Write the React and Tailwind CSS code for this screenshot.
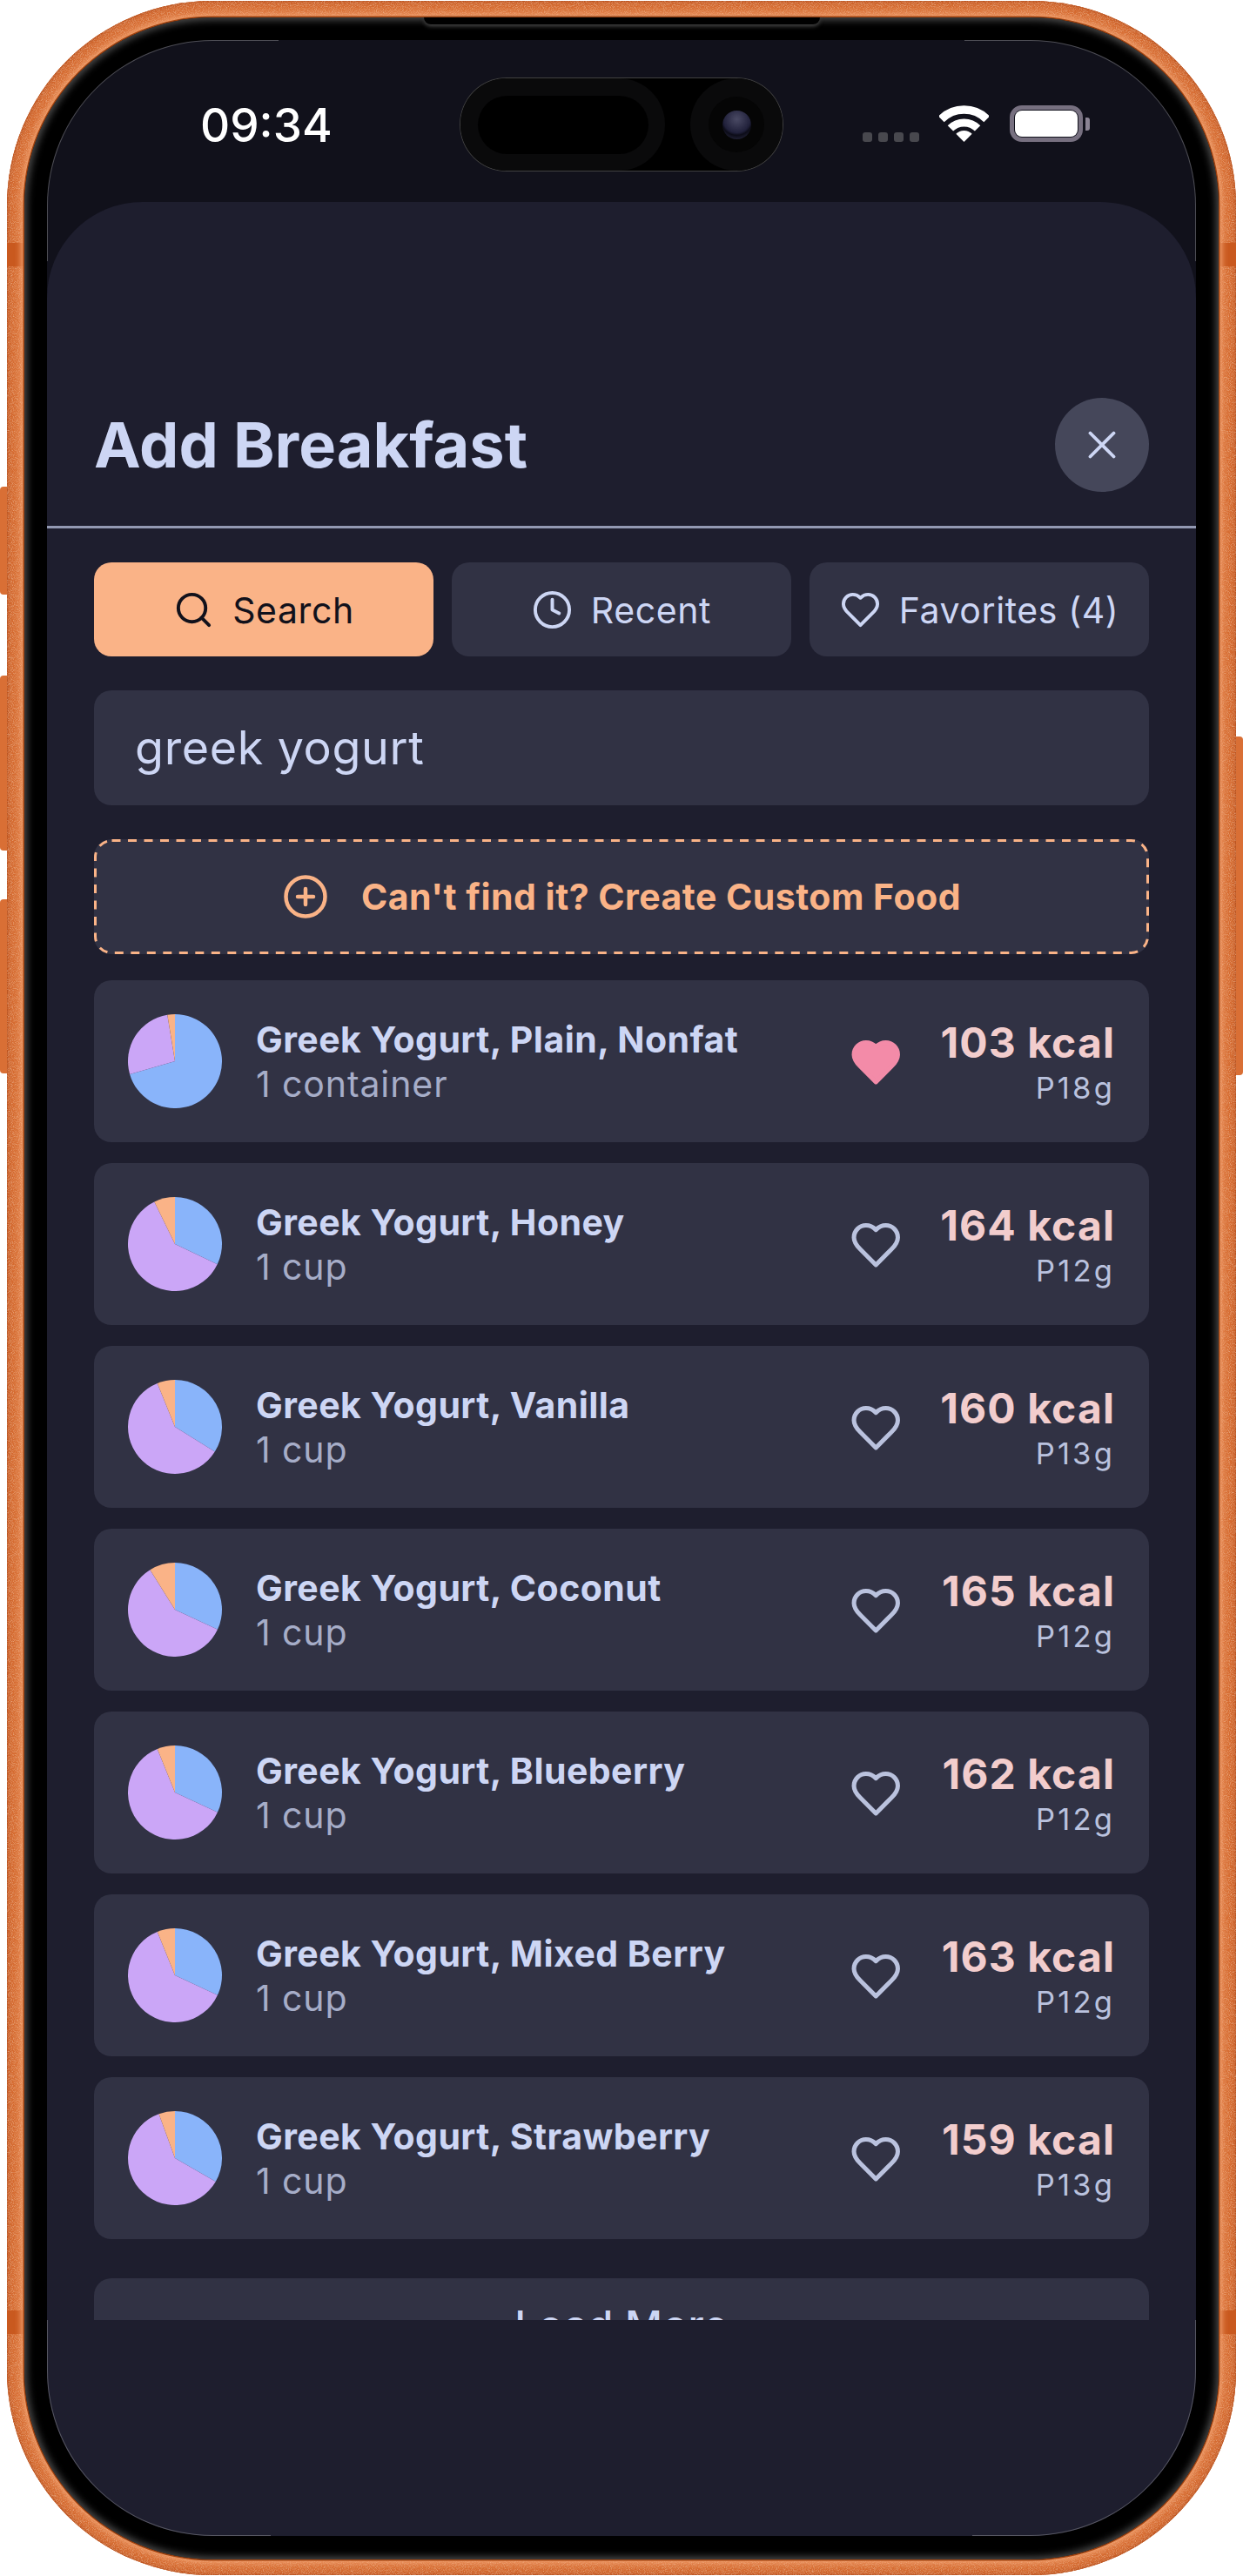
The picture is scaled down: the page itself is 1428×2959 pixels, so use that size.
import React from "react";
import { Search, Clock, X, CirclePlus } from "lucide-react";

const HEART = "M19 14c1.49-1.46 3-3.21 3-5.5A5.5 5.5 0 0 0 16.5 3c-1.76 0-3 .5-4.5 2-1.5-1.5-2.74-2-4.5-2A5.5 5.5 0 0 0 2 8.5c0 2.3 1.5 4.05 3 5.5l7 7Z";

function Heart({ size, filled, className }) {
  return (
    <svg width={size} height={size} viewBox="0 0 24 24" fill={filled ? "#f38ba8" : "none"} stroke={filled ? "#f38ba8" : "currentColor"} strokeWidth="2" strokeLinecap="round" strokeLinejoin="round" className={className}>
      <path d={HEART} />
    </svg>
  );
}

function slice(a0, a1) {
  const r = 54;
  const p = (a) => {
    const t = (a * Math.PI) / 180;
    return `${(54 + r * Math.sin(t)).toFixed(2)} ${(54 - r * Math.cos(t)).toFixed(2)}`;
  };
  return `M54 54 L${p(a0)} A${r} ${r} 0 ${a1 - a0 > 180 ? 1 : 0} 1 ${p(a1)} Z`;
}

function Pie({ blue, mauve }) {
  return (
    <svg width="108" height="108" viewBox="0 0 108 108" className="shrink-0">
      <path d={slice(0, blue)} fill="#89b4fa" />
      <path d={slice(blue, mauve)} fill="#cba6f7" />
      <path d={slice(mauve, 360)} fill="#fab387" />
    </svg>
  );
}

const foods = [
  { name: "Greek Yogurt, Plain, Nonfat", serving: "1 container", kcal: 103, p: 18, fav: true, blue: 254, mauve: 350.7 },
  { name: "Greek Yogurt, Honey", serving: "1 cup", kcal: 164, p: 12, blue: 115.6, mauve: 334 },
  { name: "Greek Yogurt, Vanilla", serving: "1 cup", kcal: 160, p: 13, blue: 122, mauve: 338 },
  { name: "Greek Yogurt, Coconut", serving: "1 cup", kcal: 165, p: 12, blue: 115, mauve: 328 },
  { name: "Greek Yogurt, Blueberry", serving: "1 cup", kcal: 162, p: 12, blue: 115, mauve: 338 },
  { name: "Greek Yogurt, Mixed Berry", serving: "1 cup", kcal: 163, p: 12, blue: 115, mauve: 338 },
  { name: "Greek Yogurt, Strawberry", serving: "1 cup", kcal: 159, p: 13, blue: 120, mauve: 340 },
];

function FoodRow({ f }) {
  return (
    <div className="flex h-[186px] items-center rounded-[20px] bg-[#313244] pl-[39px] pr-[40px]">
      <Pie blue={f.blue} mauve={f.mauve} />
      <div className="ml-[39px] min-w-0 flex-1">
        <div className="text-[41px] font-[650] leading-[54px] tracking-[0.45px] text-[#cdd6f4]">{f.name}</div>
        <div className="mt-[-3px] text-[41px] leading-[54px] tracking-[0.9px] text-[#a6adc8]">{f.serving}</div>
      </div>
      <Heart size={60.5} filled={f.fav} className="mr-[45px] mt-[2px] shrink-0 text-[#bac2de]" />
      <div className="mr-[-1px] flex w-[200px] shrink-0 flex-col items-end pt-[7px]">
        <div className="whitespace-nowrap text-[48px] font-bold leading-[54px] tracking-[1.1px] text-[#f2cdcd]">{f.kcal} kcal</div>
        <div className="mt-[1px] whitespace-nowrap text-[34.5px] leading-[48px] tracking-[3.2px] text-[#bac2de]">P{f.p}g</div>
      </div>
    </div>
  );
}

function Tab({ active, icon, label }) {
  return (
    <div className={active ? "flex h-[108px] flex-1 items-center justify-center gap-[21px] rounded-[20px] bg-[#fab387] text-[#11111b]" : "flex h-[108px] flex-1 items-center justify-center gap-[21px] rounded-[20px] bg-[#313244] text-[#cdd6f4]"}>
      {icon}
      <span className="pt-[2px] text-[41px] leading-[54px] tracking-[0.6px]">{label}</span>
    </div>
  );
}

function Wifi() {
  return (
    <svg width="57" height="42" viewBox="0 0 57 42" fill="none" className="shrink-0">
      <path d="M2.3 15.8A37 37 0 0 1 54.7 15.8" stroke="#fff" strokeWidth="9.5" />
      <path d="M12.9 26.4A22 22 0 0 1 44.1 26.4" stroke="#fff" strokeWidth="9" />
      <path d="M28.5 42L19.3 32.8A13 13 0 0 1 37.7 32.8Z" fill="#fff" />
    </svg>
  );
}

function Dot() {
  return <div className="h-[11px] w-[11px] rounded-[3px] bg-[#48484e]" />;
}

function Band({ className }) {
  return <div className={"absolute h-[27px] w-[20px] bg-[#c9591f] " + className} />;
}

export default function App() {
  return (
    <div className="relative h-[2959px] w-[1428px] overflow-hidden bg-white font-[Inter,sans-serif] [font-optical-sizing:none]">
      {/* side buttons */}
      <div className="absolute left-0 top-[559px] h-[124px] w-[12px] rounded-l-[4px] bg-[#d96f35]" />
      <div className="absolute left-0 top-[776px] h-[201px] w-[12px] rounded-l-[4px] bg-[#d96f35]" />
      <div className="absolute left-0 top-[1033px] h-[200px] w-[12px] rounded-l-[4px] bg-[#d96f35]" />
      <div className="absolute right-0 top-[846px] h-[389px] w-[12px] rounded-r-[4px] bg-[#d96f35]" />

      {/* titanium rim */}
      <div className="relative ml-[8px] mt-px h-[2957px] w-[1412px] rounded-[235px] bg-[#d66c32] pb-[18px] pl-[20px] pr-[20px] pt-[19px] shadow-[inset_0_0_0_1px_#bb5420,inset_0_0_5px_3px_#c65d27]">
        {/* brushed grain on the rim */}
        <svg width="1412" height="2957" viewBox="0 0 1412 2957" fill="none" className="pointer-events-none absolute left-0 top-0">
          <filter id="rim-grain" x="0" y="0" width="100%" height="100%" filterUnits="userSpaceOnUse">
            <feTurbulence type="fractalNoise" baseFrequency="1.1" numOctaves="2" seed="3" />
            <feColorMatrix values="0 0 0 0 1  0 0 0 0 0.85  0 0 0 0 0.7  0 0 0 1 -0.42" />
            <feComposite in2="SourceAlpha" operator="in" />
          </filter>
          <rect x="9.5" y="9.5" width="1393" height="2938" rx="225" stroke="#fff" strokeWidth="19" filter="url(#rim-grain)" />
        </svg>
        <Band className="left-0 top-[278px]" />
        <Band className="right-0 top-[278px]" />
        <Band className="bottom-[277px] left-0" />
        <Band className="bottom-[277px] right-0" />

        {/* black bezel */}
        <div className="relative h-full w-full rounded-[216px] bg-black pb-[27px] pl-[26px] pr-[26px] pt-[26px] shadow-[0_0_0_1.5px_#a1420f,0_0_7px_4px_#f2a270,inset_0_0_9px_3px_#4c4c4c]">
          {/* bezel notch */}
          <div className="absolute left-[459px] top-0 h-[8px] w-[455px] rounded-b-[14px] bg-black shadow-[0_2px_5px_0_#4c4c4c]" />

          {/* screen */}
          <div className="relative flex h-full w-full flex-col overflow-hidden rounded-[190px] bg-[#11111b]">
            {/* status bar */}
            <div className="relative flex h-[186px] shrink-0 items-start">
              <div className="ml-[176px] mt-[70px] w-[150px] text-[53px] font-medium leading-[56px] text-white">09:34</div>
              <div className="ml-[148px] mt-[43px] flex h-[108px] w-[372px] shrink-0 items-center rounded-[54px] border border-white/25 bg-black">
                <div className="flex h-full w-[235px] shrink-0 items-center justify-center rounded-full bg-[#0a0a0b]">
                  <div className="h-[67px] w-[196px] rounded-[34px] bg-black" />
                </div>
                <div className="ml-[29px] flex h-full w-[106px] shrink-0 items-center justify-center rounded-full bg-[#0a0a0b]">
                  <div className="flex h-[64px] w-[64px] items-center justify-center rounded-full bg-[#050505]">
                    <div className="h-[33px] w-[33px] rounded-full bg-[radial-gradient(circle_at_50%_30%,#4a4a64,#20203a_55%,#0c0c18_65%,#34344f)]" />
                  </div>
                </div>
              </div>
              <div className="ml-[91px] mt-[106px] flex shrink-0 gap-[7px]">
                <Dot /><Dot /><Dot /><Dot />
              </div>
              <div className="ml-[23px] mt-[75px] shrink-0"><Wifi /></div>
              <div className="ml-[24px] mt-[75px] flex shrink-0 items-center">
                <div className="h-[42px] w-[84px] rounded-[14px] border-[5px] border-[#777080] p-px">
                  <div className="h-full w-full rounded-[8px] bg-white" />
                </div>
                <div className="ml-[3px] h-[15px] w-[5px] rounded-r-[3px] bg-[#8b8494]" />
              </div>
            </div>

            {/* sheet */}
            <div className="flex flex-1 flex-col rounded-t-[110px] bg-[#1e1e2e]">
              <div className="flex h-[375px] shrink-0 items-end justify-between border-b-[3px] border-[#9399b2] pb-[39px] pl-[54px] pr-[54px]">
                <h1 className="text-[72px] font-bold leading-[108px] text-[#cdd6f4]">Add Breakfast</h1>
                <div className="flex h-[108px] w-[108px] items-center justify-center rounded-full bg-[#45475a] text-[#cdd6f4]">
                  <X size={54} strokeWidth={1.7} />
                </div>
              </div>

              <div className="h-[2058px] shrink-0 overflow-hidden pl-[54px] pr-[54px] pt-[39px]">
                <div className="flex gap-[21px]">
                  <Tab active icon={<Search size={47} strokeWidth={2} />} label="Search" />
                  <Tab icon={<Clock size={47} strokeWidth={2} />} label="Recent" />
                  <Tab icon={<Heart size={47} />} label="Favorites (4)" />
                </div>
                <div className="mt-[39px] flex h-[132px] items-center rounded-[20px] bg-[#313244] pl-[47px] text-[53.8px] tracking-[0.65px] text-[#cdd6f4]">greek yogurt</div>
                <div className="relative mt-[39px] flex h-[132px] items-center justify-center gap-[37px] rounded-[20px] bg-[#313244] text-[#fab387]">
                  <svg width="1212" height="132" viewBox="0 0 1212 132" fill="none" className="absolute left-0 top-0">
                    <rect x="1.5" y="1.5" width="1209" height="129" rx="19" stroke="#fab387" strokeWidth="3" strokeDasharray="10 8.5" />
                  </svg>
                  <CirclePlus size={54} strokeWidth={2} />
                  <span className="text-[41px] font-[650] leading-[54px] tracking-[0.48px]">Can't find it? Create Custom Food</span>
                </div>
                <div className="mt-[30px] flex flex-col gap-[24px]">
                  {foods.map((f) => <FoodRow key={f.name} f={f} />)}
                </div>
                <div className="mt-[45px] flex h-[108px] items-center justify-center rounded-[20px] bg-[#313244] text-[47px] font-medium tracking-[0.6px] text-[#cdd6f4]">Load More</div>
              </div>
            </div>
          </div>

          {/* hairline at the corners of the screen */}
          <div className="pointer-events-none absolute left-[26px] top-[26px] h-[254px] w-[266px] rounded-tl-[190px] border-l border-t border-white/25" />
          <div className="pointer-events-none absolute right-[26px] top-[26px] h-[254px] w-[266px] rounded-tr-[190px] border-r border-t border-white/25" />
          <div className="pointer-events-none absolute bottom-[27px] left-[26px] h-[248px] w-[257px] rounded-bl-[190px] border-b border-l border-white/25" />
          <div className="pointer-events-none absolute bottom-[27px] right-[26px] h-[248px] w-[257px] rounded-br-[190px] border-b border-r border-white/25" />
        </div>
      </div>
    </div>
  );
}
